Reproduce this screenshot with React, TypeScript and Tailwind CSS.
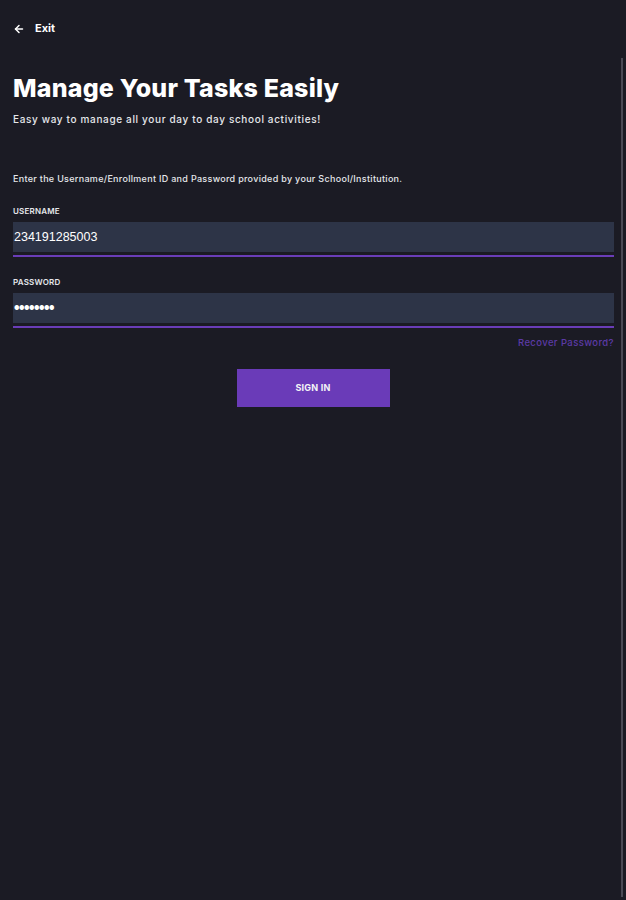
import * as React from 'react';
import { ArrowLeft } from 'lucide-react';

const font = { fontFamily: 'Inter, "Open Sans", sans-serif' };

function Field({ label, value, secret }: { label: string; value: string; secret?: boolean }) {
  return (
    <div className="flex flex-col">
      <span className="text-[8px] font-semibold tracking-wide text-gray-200 mb-[6px] leading-[10px]">{label}</span>
      <div className="h-[30px] bg-[#2d3447] flex items-center px-[1px]">
        {secret ? (
          <span className="text-[6px] text-white tracking-[-0.5px] leading-none">{'\u25CF'.repeat(8)}</span>
        ) : (
          <span className="text-[12.5px] text-white font-[Arial,'Liberation_Sans',sans-serif] leading-none">{value}</span>
        )}
      </div>
      <div className="h-[2px] bg-[#6a3db8] mt-[3px]" />
    </div>
  );
}

export default function App() {
  return (
    <div className="min-h-[900px] w-[626px] bg-[#1b1b24] relative text-white" style={font}>
      {/* faux scrollbar */}
      <div className="absolute right-[3px] top-[58px] bottom-[3px] w-[2px] bg-[#4a4a55]" />

      <div className="pl-[13px] pr-[12px]">
        <div className="flex items-center gap-[10px] pt-[21px] h-[36px]">
          <ArrowLeft className="w-[12px] h-[12px]" strokeWidth={3} />
          <span className="text-[11px] font-bold leading-none">Exit</span>
        </div>

        <h1 className="mt-[36px] text-[25px] font-extrabold leading-[32px] tracking-[0.2px]">Manage Your Tasks Easily</h1>
        <p className="mt-[9px] text-[10px] font-medium text-gray-200 leading-[12px] tracking-[0.65px]">
          Easy way to manage all your day to day school activities!
        </p>

        <p className="mt-[48px] text-[9px] font-medium text-gray-200 leading-[12px] tracking-[0.3px]">
          Enter the Username/Enrollment ID and Password provided by your School/Institution.
        </p>

        <div className="mt-[21px] flex flex-col gap-[20px]">
          <Field label="USERNAME" value="234191285003" />
          <Field label="PASSWORD" value="" secret />
        </div>

        <div className="flex justify-end mt-[9px]">
          <span className="text-[9.5px] font-medium text-[#5b3aa6] leading-[12px] tracking-[0.4px]">Recover Password?</span>
        </div>

        <div className="flex justify-center mt-[20px] pr-[1px]">
          <button className="w-[153px] h-[38px] bg-[#6a3bb8] text-[9px] font-bold tracking-wide text-gray-100">
            SIGN IN
          </button>
        </div>
      </div>
    </div>
  );
}
